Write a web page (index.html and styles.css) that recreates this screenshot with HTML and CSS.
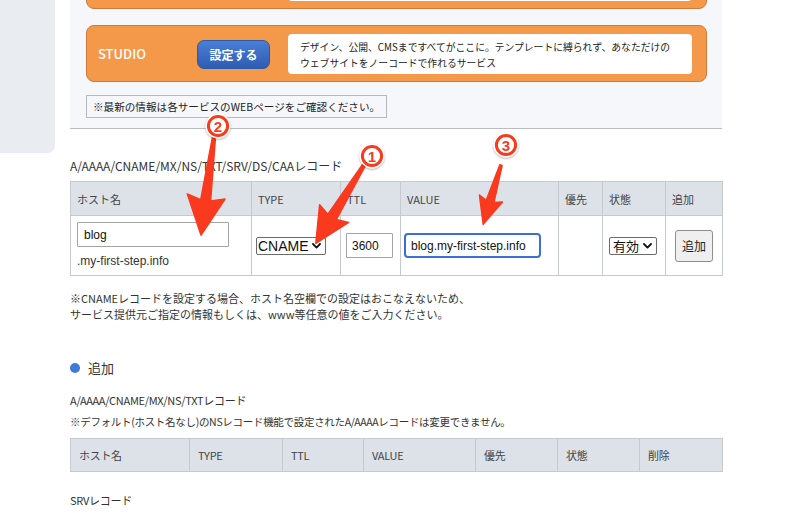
FILE: index.html
```html
<!DOCTYPE html>
<html lang="ja">
<head>
<meta charset="utf-8">
<title>DNS設定</title>
<link rel="stylesheet" href="styles.css">
</head>
<body>
<div class="page">
  <aside class="sidebar"></aside>
  <main class="main">
    <section class="panel">
      <div class="card card-cut">
        <span class="card-name"></span>
        <span class="btn-set btn-hidden"></span>
        <div class="card-desc"></div>
      </div>
      <div class="card">
        <span class="card-name">STUDIO</span>
        <button class="btn-set" type="button">設定する</button>
        <div class="card-desc">
          <span>デザイン、公開、CMSまですべてがここに。テンプレートに縛られず、あなただけの</span>
          <span>ウェブサイトをノーコードで作れるサービス</span>
        </div>
      </div>
      <p class="notice">※最新の情報は各サービスのWEBページをご確認ください。</p>
    </section>

    <p class="rec-title">A/AAAA/CNAME/MX/NS/TXT/SRV/DS/CAAレコード</p>
    <table class="dns add-table">
      <colgroup>
        <col class="c-host"><col class="c-type"><col class="c-ttl"><col class="c-value"><col class="c-pri"><col class="c-state"><col class="c-add">
      </colgroup>
      <thead>
        <tr><th>ホスト名</th><th>TYPE</th><th>TTL</th><th>VALUE</th><th>優先</th><th>状態</th><th>追加</th></tr>
      </thead>
      <tbody>
        <tr>
          <td class="td-host">
            <input class="in-host" type="text" value="blog">
            <div class="domain">.my-first-step.info</div>
          </td>
          <td class="td-type">
            <span class="select sel-type"><select><option>CNAME</option></select><svg class="chev" width="9" height="6" viewBox="0 0 9 6"><path d="M1 1 L4.5 4.6 L8 1" fill="none" stroke="#111" stroke-width="1.8" stroke-linecap="round" stroke-linejoin="round"/></svg></span>
          </td>
          <td class="td-ttl"><input class="in-ttl" type="text" value="3600"></td>
          <td class="td-value"><input class="in-value" type="text" value="blog.my-first-step.info"></td>
          <td></td>
          <td class="td-state">
            <span class="select sel-state"><select><option>有効</option></select><svg class="chev" width="9" height="6" viewBox="0 0 9 6"><path d="M1 1 L4.5 4.6 L8 1" fill="none" stroke="#111" stroke-width="1.8" stroke-linecap="round" stroke-linejoin="round"/></svg></span>
          </td>
          <td class="td-add"><button class="btn-add" type="button">追加</button></td>
        </tr>
      </tbody>
    </table>
    <p class="note">※CNAMEレコードを設定する場合、ホスト名空欄での設定はおこなえないため、<br>サービス提供元ご指定の情報もしくは、www等任意の値をご入力ください。</p>

    <h2 class="sec-head">追加</h2>
    <p class="rec-title rec-small">A/AAAA/CNAME/MX/NS/TXTレコード</p>
    <p class="note note-small">※デフォルト(ホスト名なし)のNSレコード機能で設定されたA/AAAAレコードは変更できません。</p>
    <table class="dns list-table">
      <colgroup>
        <col class="l-host"><col class="l-type"><col class="l-ttl"><col class="l-value"><col class="l-pri"><col class="l-state"><col class="l-del">
      </colgroup>
      <thead>
        <tr><th>ホスト名</th><th>TYPE</th><th>TTL</th><th>VALUE</th><th>優先</th><th>状態</th><th>削除</th></tr>
      </thead>
    </table>
    <p class="rec-title rec-small rec-srv">SRVレコード</p>
  </main>

  <svg class="annot" width="793" height="513" viewBox="0 0 793 513">
    <defs>
      <filter id="sh" x="-40%" y="-40%" width="180%" height="180%">
        <feDropShadow dx="0" dy="1" stdDeviation="1.3" flood-color="#000" flood-opacity="0.35"/>
      </filter>
    </defs>
    <g fill="#f93a1f" stroke="#f93a1f" stroke-width="1.5" stroke-linejoin="round">
      <path transform="translate(214 137) rotate(7.5)" d="M-1.5 0 L1.5 0 L5 64 L19 60 L0 99 L-19 60 L-5 64 Z"/>
      <path transform="translate(364 165) rotate(31.6)" d="M-1.5 0 L1.5 0 L5 61 L17 57 L0 92 L-17 57 L-5 61 Z"/>
      <path transform="translate(501 165) rotate(16.7)" d="M-1.2 0 L1.2 0 L4 38 L12 35 L0 62 L-12 35 L-4 38 Z"/>
    </g>
    <g class="num" filter="url(#sh)">
      <g transform="translate(218 126)">
        <circle r="12.5" fill="#fff"/>
        <circle r="9.6" fill="#fff" stroke="#f93a1f" stroke-width="3"/>
        <text y="0.5">2</text>
      </g>
      <g transform="translate(372 156)">
        <circle r="12.5" fill="#fff"/>
        <circle r="9.6" fill="#fff" stroke="#f93a1f" stroke-width="3"/>
        <text y="0.5">1</text>
      </g>
      <g transform="translate(506 145)">
        <circle r="12.5" fill="#fff"/>
        <circle r="9.6" fill="#fff" stroke="#f93a1f" stroke-width="3"/>
        <text y="0.5">3</text>
      </g>
    </g>
  </svg>
</div>
</body>
</html>
```
FILE: styles.css
```css
* { box-sizing: border-box; }

body {
  margin: 0;
  font-family: "Noto Sans CJK JP", "Noto Sans", sans-serif;
  color: #333;
  background: #fff;
}

.page {
  position: relative;
  display: grid;
  grid-template-columns: 55px 652px;
  column-gap: 15px;
  align-items: start;
}

.sidebar {
  height: 153px;
  background: #e9edf2;
  border-radius: 0 0 7px 0;
}

.main {
  display: flex;
  flex-direction: column;
  align-items: flex-start;
}

/* ---------- top panel ---------- */
.panel {
  width: 652px;
  background: #f6f7fb;
  border-bottom: 1px solid #b9bcc1;
  padding: 0 15px 10px 16px;
  display: flex;
  flex-direction: column;
  align-items: flex-start;
}

.card {
  width: 621px;
  height: 57px;
  margin-top: 16px;
  background: #f4984a;
  border: 1px solid #cf7a3a;
  border-radius: 8px;
  padding: 8px 14px 7px 11px;
  display: flex;
  align-items: center;
}

.card-cut {
  margin-top: -48px;
}

.card-name {
  width: 99px;
  flex: none;
  color: #fff;
  font-size: 13px;
  line-height: 18px;
  font-weight: 500;
}

.btn-set {
  flex: none;
  width: 73px;
  height: 29px;
  border: 1px solid #2d5aa8;
  border-radius: 7px;
  background: linear-gradient(#4a7fd6, #2d5db3);
  color: #fff;
  font-family: inherit;
  font-size: 12px;
  font-weight: 700;
  padding: 0;
  margin-right: 18px;
}

.btn-hidden {
  visibility: hidden;
}

.card-desc {
  flex: 1;
  align-self: stretch;
  background: #fff;
  border-radius: 4px;
  padding: 2px 12px 0;
  display: flex;
  flex-direction: column;
  justify-content: center;
  font-size: 9.8px;
  line-height: 16px;
  color: #222;
}

.notice {
  margin: 13px 0 0;
  height: 23px;
  border: 1px solid #b8b8b8;
  padding: 0 6px;
  font-size: 10.6px;
  line-height: 21px;
  color: #222;
}

/* ---------- records ---------- */
.rec-title {
  margin: 28px 0 6px;
  font-size: 12px;
  line-height: 18px;
  color: #333;
}

.dns {
  border-collapse: collapse;
  table-layout: fixed;
  width: 652px;
  border: 1px solid #c6c9cd;
}

.dns th {
  background: #dde2e8;
  border: 1px solid #c6c9cd;
  font-weight: 400;
  font-size: 11px;
  color: #444;
  text-align: left;
  height: 34px;
  padding: 0 0 0 6px;
}

.dns td {
  border: 1px solid #c6c9cd;
  height: 60px;
  padding: 0 0 0 4px;
  vertical-align: middle;
}

.c-host { width: 181px; }
.c-type { width: 89px; }
.c-ttl { width: 60px; }
.c-value { width: 158px; }
.c-pri { width: 44px; }
.c-state { width: 63px; }
.c-add { width: 57px; }

.dns td.td-host {
  vertical-align: top;
  padding: 6px 0 0 6px;
}

.in-host,
.in-ttl,
.in-value {
  display: block;
  height: 25px;
  font-family: "Liberation Sans", Arial, sans-serif;
  font-size: 12px;
  color: #111;
  background: #fff;
  outline: none;
}

.in-host {
  width: 152px;
  border: 1px solid #a4a4a4;
  border-radius: 1px;
  padding: 0 6px;
}

.domain {
  margin-top: 6px;
  font-family: "Liberation Sans", Arial, sans-serif;
  font-size: 12px;
  line-height: 16px;
  color: #333;
}

.dns td.td-ttl { padding-left: 5px; }
.in-ttl {
  width: 47px;
  border: 1px solid #a4a4a4;
  border-radius: 1px;
  padding: 0 5px;
}

.dns td.td-value { padding-left: 3px; }
.in-value {
  width: 137px;
  border: 2px solid #3b6fd6;
  border-radius: 4px;
  padding: 0 5px;
}

.select {
  display: inline-flex;
  align-items: center;
  height: 18px;
  border: 1px solid #6b6b6b;
  border-radius: 2px;
  background: #fff;
  padding: 0 3px 0 1px;
  gap: 3px;
  vertical-align: middle;
  position: relative;
  top: -2px;
}

.select select {
  appearance: none;
  -webkit-appearance: none;
  border: none;
  background: transparent;
  padding: 0;
  margin: 0;
  font-family: "Liberation Sans", Arial, sans-serif;
  font-size: 14px;
  line-height: 16px;
  height: 16px;
  color: #111;
  outline: none;
}

.sel-type { width: 70px; }
.sel-state { width: 48px; }
.sel-state select {
  font-family: "Noto Sans CJK JP", sans-serif;
  font-size: 13px;
  padding-left: 2px;
}

.chev { flex: none; display: block; }

.dns td.td-type { padding-left: 4px; }
.dns td.td-state { padding-left: 6px; }
.dns td.td-add { padding: 0; text-align: center; }

.btn-add {
  width: 38px;
  height: 32px;
  border: 1px solid #8e8e8e;
  border-radius: 3px;
  background: #efefef;
  font-family: "Noto Sans CJK JP", sans-serif;
  font-size: 12px;
  color: #222;
  padding: 0;
}

.note {
  margin: 14px 0 0;
  font-size: 11px;
  line-height: 16px;
  color: #333;
}

.sec-head {
  margin: 36px 0 0;
  display: flex;
  align-items: center;
  gap: 8px;
  font-size: 13px;
  line-height: 20px;
  font-weight: 400;
  color: #333;
}

.sec-head::before {
  content: "";
  width: 10px;
  height: 10px;
  border-radius: 50%;
  background: #3d7bd9;
}

.rec-small {
  margin: 14px 0 0;
  font-size: 11px;
  line-height: 16px;
  letter-spacing: -0.3px;
}

.note-small {
  margin: 6px 0 8px;
  font-size: 10.5px;
  letter-spacing: -0.3px;
}

.list-table th {
  height: 33px;
  padding-left: 8px;
  letter-spacing: -0.3px;
}

.l-host { width: 119px; }
.l-type { width: 93px; }
.l-ttl { width: 81px; }
.l-value { width: 112px; }
.l-pri { width: 82px; }
.l-state { width: 82px; }
.l-del { width: 83px; }

.rec-srv { margin-top: 20px; }

/* ---------- annotations overlay ---------- */
.annot {
  position: absolute;
  left: 0;
  top: 0;
  pointer-events: none;
}

.num text {
  font-family: "Liberation Sans", Arial, sans-serif;
  font-size: 15px;
  font-weight: 700;
  fill: #f93a1f;
  text-anchor: middle;
  dominant-baseline: central;
}
```
